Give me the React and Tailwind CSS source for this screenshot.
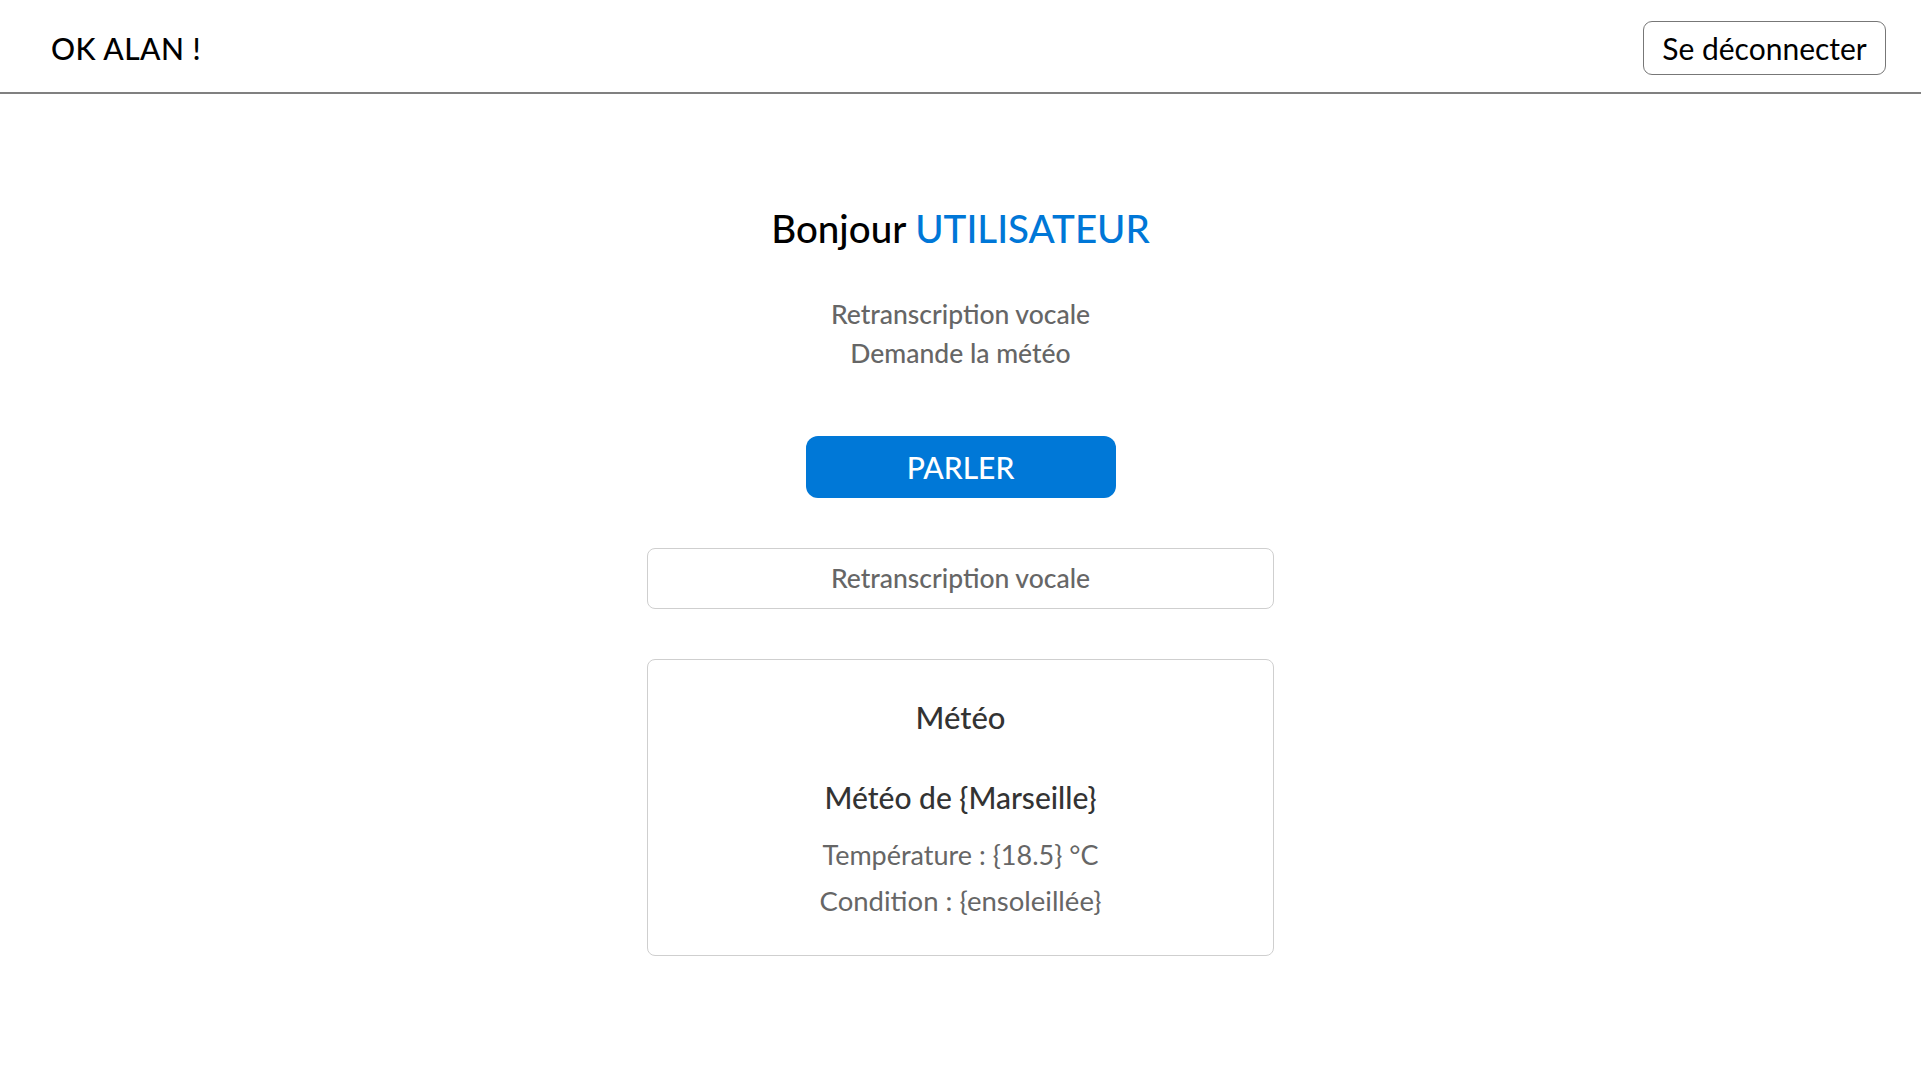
import React from 'react';

const font = { fontFamily: '"Lato", "Noto Sans", sans-serif' };

function Header() {
  return (
    <header className="h-[94px] border-b-2 border-[#808080] flex items-center justify-between pt-[4px] pl-[51px] pr-[35px]">
      <span className="text-[30px] font-medium text-black leading-none tracking-[0.5px]">OK ALAN !</span>
      <button className="w-[243px] h-[54px] border border-[#777] rounded-[9px] text-[30px] text-black leading-none">
        Se déconnecter
      </button>
    </header>
  );
}

function MeteoCard() {
  return (
    <div className="w-[627px] border border-[#cfcfcf] rounded-[8px] pt-[37px] pb-[36px] flex flex-col items-center">
      <h2 className="text-[31px] leading-[40px] font-medium text-[#333]">Météo</h2>
      <h3 className="mt-[41px] text-[30px] leading-[38px] font-medium text-[#333]">Météo de {'{'}Marseille{'}'}</h3>
      <p className="mt-[21px] text-[27px] leading-[36px] text-[#666]">Température : {'{'}18.5{'}'} °C</p>
      <p className="mt-[10px] text-[27.5px] leading-[36px] text-[#666]">Condition : {'{'}ensoleillée{'}'}</p>
    </div>
  );
}

export default function App() {
  return (
    <div className="min-h-screen bg-white" style={font}>
      <Header />
      <main className="flex flex-col items-center pt-[110px]">
        <h1 className="text-[38.5px] leading-[48px] font-medium text-black">
          Bonjour <span className="text-[#0077d7]">UTILISATEUR</span>
        </h1>
        <div className="mt-[43px] flex flex-col items-center text-[26.5px] leading-[39px] font-medium text-[#666]">
          <span>Retranscription vocale</span>
          <span>Demande la météo</span>
        </div>
        <button className="mt-[63px] w-[310px] h-[62px] rounded-[12px] bg-[#0078d7] text-white text-[30px] font-medium leading-none">
          PARLER
        </button>
        <div className="mt-[50px] w-[627px] h-[61px] border border-[#cfcfcf] rounded-[8px] flex items-center justify-center text-[26.5px] font-medium text-[#666]">
          Retranscription vocale
        </div>
        <div className="mt-[50px]">
          <MeteoCard />
        </div>
      </main>
    </div>
  );
}
